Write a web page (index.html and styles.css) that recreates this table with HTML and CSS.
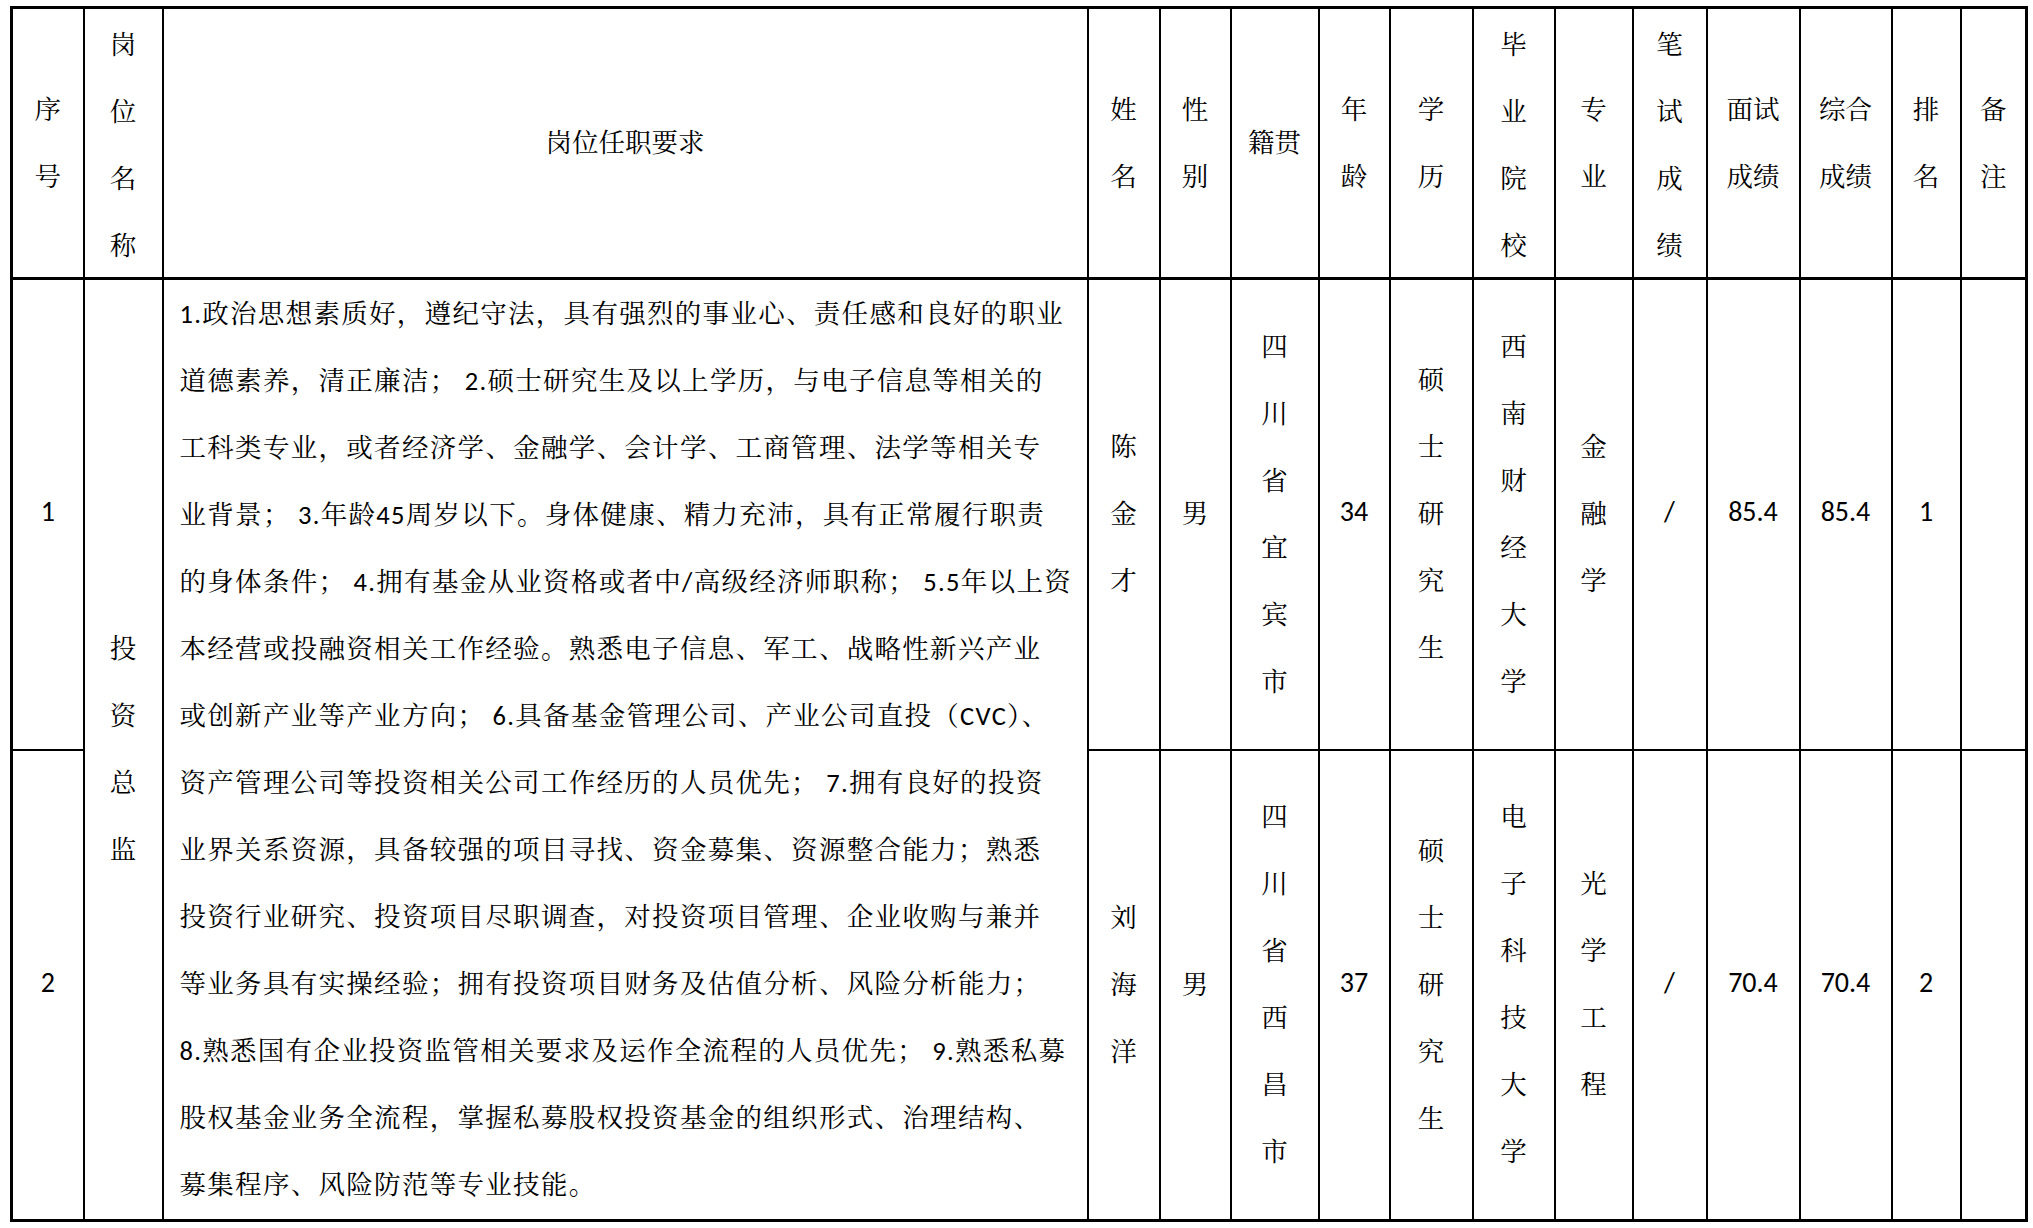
FILE: index.html
```html
<!DOCTYPE html>
<html lang="zh-CN">
<head>
<meta charset="utf-8">
<title>岗位任职要求</title>
<link rel="stylesheet" href="styles.css">
</head>
<body>
<div class="page">
<table class="grid">
<colgroup>
<col class="c-no"><col class="c-pos"><col class="c-req"><col class="c-name"><col class="c-sex"><col class="c-home"><col class="c-age"><col class="c-edu"><col class="c-school"><col class="c-major"><col class="c-written"><col class="c-interview"><col class="c-total"><col class="c-rank"><col class="c-note">
</colgroup>
<thead>
<tr class="head">
<th class="lift">序<br>号</th>
<th>岗<br>位<br>名<br>称</th>
<th class="lift">岗位任职要求</th>
<th class="lift">姓<br>名</th>
<th class="lift">性<br>别</th>
<th class="lift">籍贯</th>
<th class="lift">年<br>龄</th>
<th class="lift">学<br>历</th>
<th>毕<br>业<br>院<br>校</th>
<th class="lift">专<br>业</th>
<th>笔<br>试<br>成<br>绩</th>
<th class="lift">面试<br>成绩</th>
<th class="lift">综合<br>成绩</th>
<th class="lift">排<br>名</th>
<th class="lift">备<br>注</th>
</tr>
</thead>
<tbody>
<tr class="row">
<td class="num">1</td>
<td rowspan="2">投<br>资<br>总<br>监</td>
<td rowspan="2" class="req">1.政治思想素质好，遵纪守法，具有强烈的事业心、责任感和良好的职业<br>道德素养，清正廉洁； 2.硕士研究生及以上学历，与电子信息等相关的<br>工科类专业，或者经济学、金融学、会计学、工商管理、法学等相关专<br>业背景； 3.年龄45周岁以下。身体健康、精力充沛，具有正常履行职责<br>的身体条件； 4.拥有基金从业资格或者中/高级经济师职称； 5.5年以上资<br>本经营或投融资相关工作经验。熟悉电子信息、军工、战略性新兴产业<br>或创新产业等产业方向； 6.具备基金管理公司、产业公司直投（CVC）、<br>资产管理公司等投资相关公司工作经历的人员优先； 7.拥有良好的投资<br>业界关系资源，具备较强的项目寻找、资金募集、资源整合能力；熟悉<br>投资行业研究、投资项目尽职调查，对投资项目管理、企业收购与兼并<br>等业务具有实操经验；拥有投资项目财务及估值分析、风险分析能力；<br>8.熟悉国有企业投资监管相关要求及运作全流程的人员优先； 9.熟悉私募<br>股权基金业务全流程，掌握私募股权投资基金的组织形式、治理结构、<br>募集程序、风险防范等专业技能。</td>
<td>陈<br>金<br>才</td>
<td>男</td>
<td>四<br>川<br>省<br>宜<br>宾<br>市</td>
<td class="num">34</td>
<td>硕<br>士<br>研<br>究<br>生</td>
<td>西<br>南<br>财<br>经<br>大<br>学</td>
<td>金<br>融<br>学</td>
<td class="num">/</td>
<td class="num">85.4</td>
<td class="num">85.4</td>
<td class="num">1</td>
<td></td>
</tr>
<tr class="row">
<td class="num">2</td>
<td>刘<br>海<br>洋</td>
<td>男</td>
<td>四<br>川<br>省<br>西<br>昌<br>市</td>
<td class="num">37</td>
<td>硕<br>士<br>研<br>究<br>生</td>
<td>电<br>子<br>科<br>技<br>大<br>学</td>
<td>光<br>学<br>工<br>程</td>
<td class="num">/</td>
<td class="num">70.4</td>
<td class="num">70.4</td>
<td class="num">2</td>
<td></td>
</tr>
</tbody>
</table>
</div>
</body>
</html>
```

FILE: styles.css
```css
html, body {
  margin: 0;
  padding: 0;
  background: #ffffff;
}

.page {
  padding: 6px 0 0 10px;
}

.grid {
  border-collapse: collapse;
  table-layout: fixed;
  width: 2017px;
  border: 3px solid #000;
  color: #000;
  font-family: "Noto Serif CJK SC", "Noto Sans CJK SC", serif;
  font-size: 26.5px;
  line-height: 67px;
}

.grid th,
.grid td {
  border: 2px solid #000;
  padding: 0 0 5px 0;
  text-align: center;
  vertical-align: middle;
  font-weight: normal;
  overflow: hidden;
}

.grid th {
  padding-bottom: 0;
}

.grid th.lift {
  padding-bottom: 5px;
}

.grid thead th {
  border-top-width: 3px;
  border-bottom-width: 3px;
}

.grid tr > :first-child { border-left-width: 3px; }
.grid tr > :last-child { border-right-width: 3px; }
.grid tbody tr:last-child td,
.grid tbody td[rowspan] { border-bottom-width: 3px; }

.head { height: 269px; }
.row { height: 471px; }

.c-no { width: 72px; }
.c-pos { width: 79px; }
.c-req { width: 925px; }
.c-name { width: 72px; }
.c-sex { width: 71px; }
.c-home { width: 88px; }
.c-age { width: 71px; }
.c-edu { width: 83px; }
.c-school { width: 82px; }
.c-major { width: 78px; }
.c-written { width: 74px; }
.c-interview { width: 93px; }
.c-total { width: 92px; }
.c-rank { width: 69px; }
.c-note { width: 66px; }

.grid td.num {
  font-family: "Carlito", "Calibri", "Lato", sans-serif;
  font-size: 28px;
}

.grid td.req {
  text-align: left;
  padding: 0 0 0 16px;
  white-space: nowrap;
  letter-spacing: 1.3px;
  font-family: "Carlito", "Calibri", "Lato", "Noto Serif CJK SC", "Noto Sans CJK SC", serif;
}
```
